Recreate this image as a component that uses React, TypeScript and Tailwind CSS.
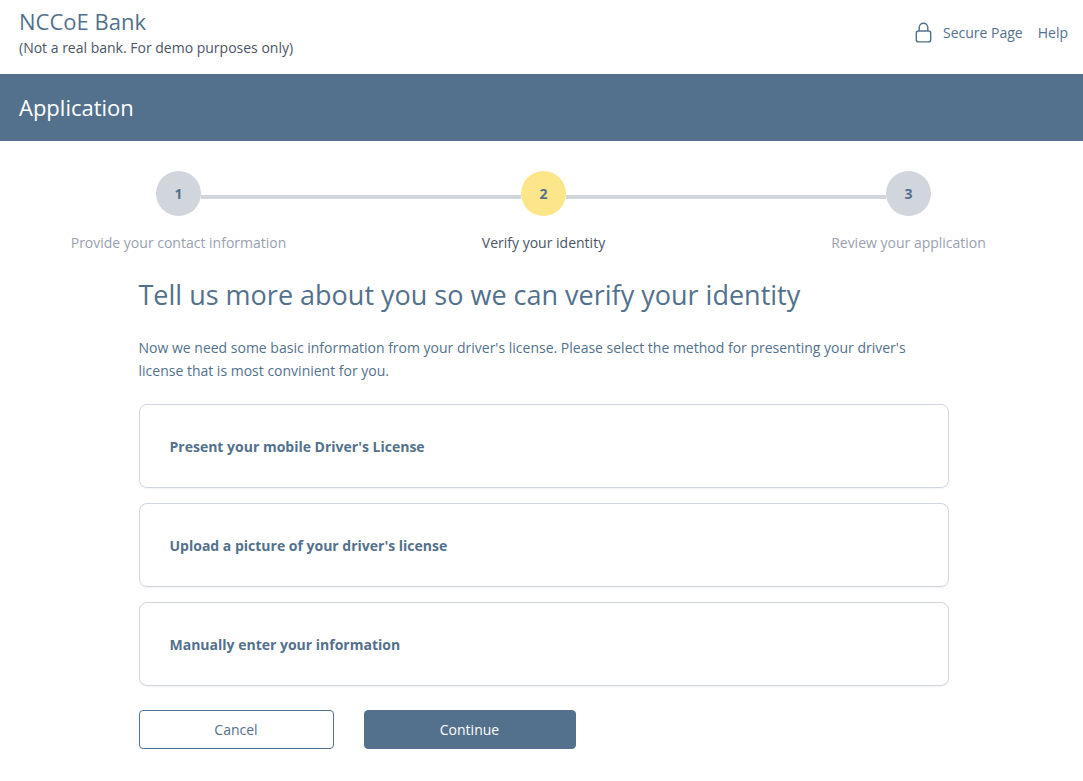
import { Fragment } from "react";
import clsx from "clsx";

const steps = [
  { id: 1, label: "Provide your contact information" },
  { id: 2, label: "Verify your identity" },
  { id: 3, label: "Review your application" },
];

const methods = [
  "Present your mobile Driver's License",
  "Upload a picture of your driver's license",
  "Manually enter your information",
];

function LockIcon() {
  return (
    <svg
      className="size-[23px]"
      viewBox="0 0 24 24"
      fill="none"
      stroke="currentColor"
      strokeWidth={1.5}
      strokeLinecap="round"
      strokeLinejoin="round"
      aria-hidden="true"
    >
      <path d="M16.5 10.5V6.75a4.5 4.5 0 1 0-9 0v3.75m-.75 11.25h10.5a2.25 2.25 0 0 0 2.25-2.25v-6.75a2.25 2.25 0 0 0-2.25-2.25H6.75a2.25 2.25 0 0 0-2.25 2.25v6.75a2.25 2.25 0 0 0 2.25 2.25Z" />
    </svg>
  );
}

function Header() {
  return (
    <header>
      <div className="flex items-center justify-between pt-1.5 pr-[15px] pb-[15px] pl-[19px]">
        <div>
          <div className="text-[22px] leading-[30px]">NCCoE Bank</div>
          <div className="text-[14px] leading-[23px] text-gray-600">
            (Not a real bank. For demo purposes only)
          </div>
        </div>
        <nav className="flex items-center gap-[15px] text-[14px] leading-[23px]">
          <a href="#secure" className="flex items-center gap-2">
            <LockIcon />
            Secure Page
          </a>
          <a href="#help">Help</a>
        </nav>
      </div>
      <div className="bg-[#53718d] px-[19px] py-5 text-[22px] leading-[27px] text-white">
        Application
      </div>
    </header>
  );
}

function Steps({ current }: { current: number }) {
  return (
    <ol className="mx-auto flex max-w-[775px]">
      {steps.map((step, i) => (
        <Fragment key={step.id}>
          {i > 0 && (
            <li aria-hidden="true" className="mt-6 h-1 flex-1 bg-gray-300" />
          )}
          <li
            className="flex w-[45px] flex-col items-center gap-[15px]"
            aria-current={step.id === current ? "step" : undefined}
          >
            <span
              className={clsx(
                "flex size-[45px] items-center justify-center rounded-full text-[14px] font-bold",
                step.id === current ? "bg-[#fde68a]" : "bg-gray-300"
              )}
            >
              {step.id}
            </span>
            <span
              className={clsx(
                "text-[14px] leading-[23px] whitespace-nowrap",
                step.id === current ? "text-gray-600" : "text-gray-400"
              )}
            >
              {step.label}
            </span>
          </li>
        </Fragment>
      ))}
    </ol>
  );
}

export default function App() {
  return (
    <div className="min-h-screen bg-white font-['Open_Sans',sans-serif] text-[#53718d]">
      <Header />
      <main className="pt-[30px] pb-8 pl-1">
        <Steps current={2} />
        <div className="mx-auto max-w-[810px]">
          <h1 className="mt-6 text-[27px] leading-[34px]">
            Tell us more about you so we can verify your identity
          </h1>
          <p className="mt-6 text-[14px] leading-[23px]">
            Now we need some basic information from your driver's license.
            Please select the method for presenting your driver's license that
            is most convinient for you.
          </p>
          <div className="mt-[22px] flex flex-col gap-[15px]">
            {methods.map((method) => (
              <button
                key={method}
                type="button"
                className="rounded-lg border border-gray-300 px-[30px] pt-[30px] pb-[29px] text-left text-[14px] leading-[23px] font-bold shadow-xs"
              >
                {method}
              </button>
            ))}
          </div>
          <div className="mt-6 flex gap-[30px] text-[14px] leading-[23px]">
            <button
              type="button"
              className="w-[195px] rounded border border-[#53718d] py-[7px]"
            >
              Cancel
            </button>
            <button
              type="button"
              className="w-[212px] rounded border border-[#53718d] bg-[#53718d] py-[7px] text-white"
            >
              Continue
            </button>
          </div>
        </div>
      </main>
    </div>
  );
}
